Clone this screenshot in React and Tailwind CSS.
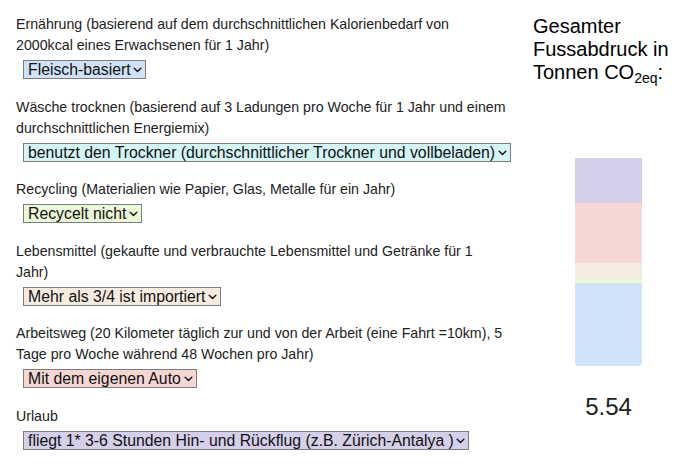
import React, { useState } from 'react';

const categories = [
    {
        key: 'food',
        label: 'Ernährung (basierend auf dem durchschnittlichen Kalorienbedarf von 2000kcal eines Erwachsenen für 1 Jahr)',
        option: 'Fleisch-basiert',
        selectClass: 'bg-[#cfe2f7]',
        barClass: 'bg-[#d1e3f8]',
        value: 2.2
    },
    {
        key: 'dryer',
        label: 'Wäsche trocknen (basierend auf 3 Ladungen pro Woche für 1 Jahr und einem durchschnittlichen Energiemix)',
        option: 'benutzt den Trockner (durchschnittlicher Trockner und vollbeladen)',
        selectClass: 'bg-[#d4f4f6]',
        barClass: 'bg-[#d6f4f6]',
        value: 0
    },
    {
        key: 'recycling',
        label: 'Recycling (Materialien wie Papier, Glas, Metalle für ein Jahr)',
        option: 'Recycelt nicht',
        selectClass: 'bg-[#ebf8d8]',
        barClass: 'bg-[#eef9dc]',
        value: 0.11
    },
    {
        key: 'groceries',
        label: 'Lebensmittel (gekaufte und verbrauchte Lebensmittel und Getränke für 1 Jahr)',
        option: 'Mehr als 3/4 ist importiert',
        selectClass: 'bg-[#f6ebe1]',
        barClass: 'bg-[#f6ece2]',
        value: 0.43
    },
    {
        key: 'commute',
        label: 'Arbeitsweg (20 Kilometer täglich zur und von der Arbeit (eine Fahrt =10km), 5 Tage pro Woche während 48 Wochen pro Jahr)',
        option: 'Mit dem eigenen Auto',
        selectClass: 'bg-[#f5d6d4]',
        barClass: 'bg-[#f5d8d6]',
        value: 1.6
    },
    {
        key: 'holiday',
        label: 'Urlaub',
        option: 'fliegt 1* 3-6 Stunden Hin- und Rückflug (z.B. Zürich-Antalya )',
        selectClass: 'bg-[#d5cfe9]',
        barClass: 'bg-[#d4cee8]',
        value: 1.2
    }
];

const BAR_HEIGHT = 208;

const Chevron = () => (
    <svg width="9" height="6" viewBox="0 0 9 6" className="pointer-events-none absolute right-[4px] top-[7px]">
        <path d="M1.2 1.3l3.3 3.2 3.3-3.2" fill="none" stroke="#1a1a1a" strokeWidth="1.5" strokeLinecap="round" strokeLinejoin="round" />
    </svg>
);

const CategorySelect = ({ item }) => (
    <div className="relative ml-[7px] mt-[4px] flex">
        <select
            defaultValue={item.option}
            className={`h-[19px] appearance-none border border-[#7d7d7d] pl-[4px] pr-[14px] text-[15.8px] leading-[17px] text-[#111] outline-none ${item.selectClass}`}
        >
            <option value={item.option}>{item.option}</option>
        </select>
        <Chevron />
    </div>
);

export default function App() {
    const [items] = useState(categories);
    const total = items.reduce((sum, item) => sum + item.value, 0);
    const stacked = [...items].reverse();

    return (
        <div className="flex h-[466px] w-[684px] bg-white pl-4 pt-[14px] font-['Liberation_Sans',Arial,sans-serif] text-[#222]">
            <div className="flex w-[492px] flex-col gap-[17.6px]">
                {items.map((item) => (
                    <div key={item.key} className="flex flex-col items-start">
                        <p className="text-[14.2px] leading-[21px]">{item.label}</p>
                        <CategorySelect item={item} />
                    </div>
                ))}
            </div>

            <div className="ml-[25px] flex w-[151px] flex-col pt-[1px]">
                <div className="text-[20px] leading-[23px] text-black">
                    Gesamter Fussabdruck in Tonnen CO
                    <sub className="text-[14px] leading-none">2eq</sub>
                    <span>:</span>
                </div>
                <div className="mx-auto mt-[74px] flex w-[67px] flex-col overflow-hidden rounded-b-[4px]">
                    {stacked.map((item) => (
                        <div
                            key={item.key}
                            className={item.barClass}
                            style={{ height: `${(item.value / total) * BAR_HEIGHT}px` }}
                        />
                    ))}
                </div>
                <div className="mt-[27px] text-center text-[24px] leading-[28px] text-[#222]">
                    {total.toFixed(2)}
                </div>
            </div>
        </div>
    );
}
